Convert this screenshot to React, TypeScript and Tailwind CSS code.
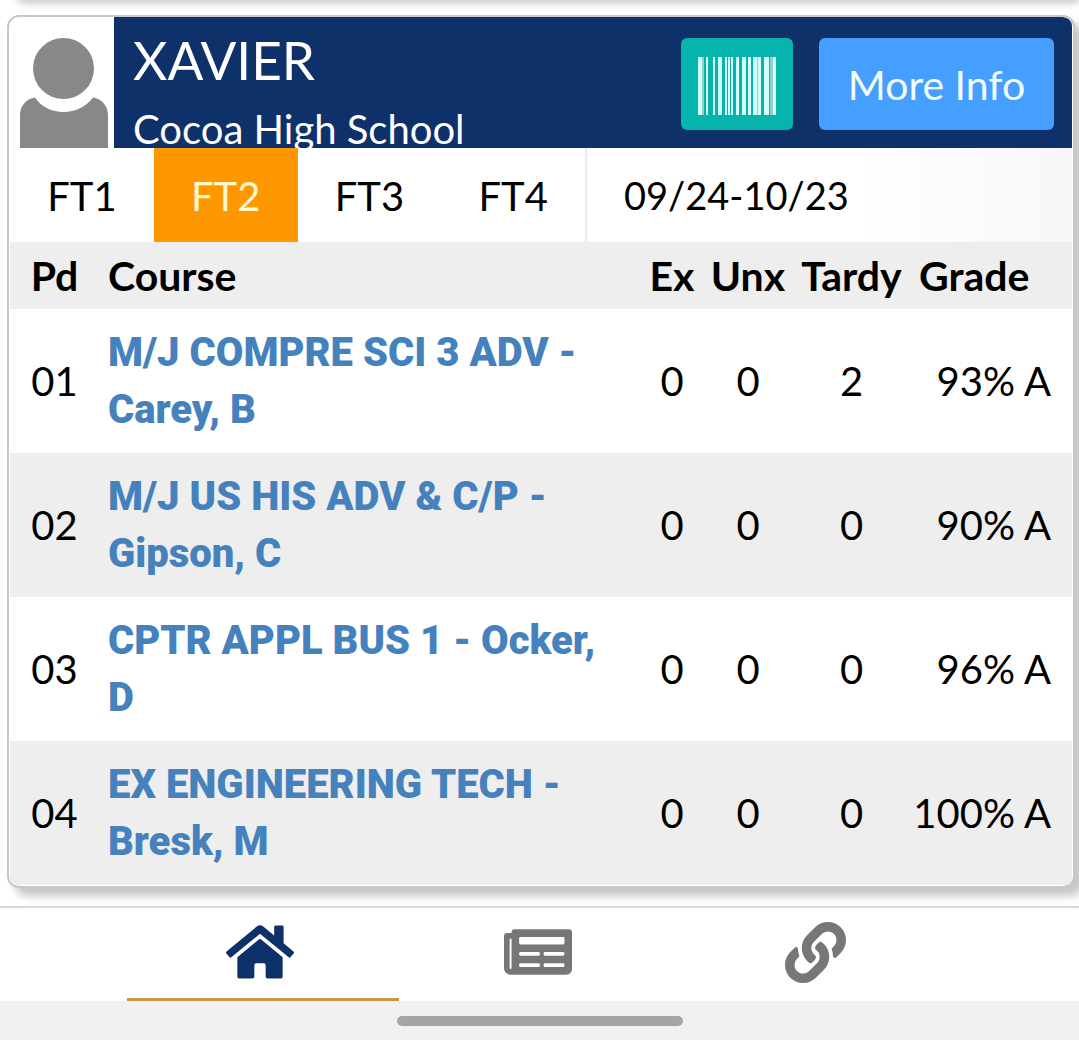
import { FaHome, FaLink, FaNewspaper } from "react-icons/fa";

const terms = ["FT1", "FT2", "FT3", "FT4"];

const courses = [
  { pd: "01", name: "M/J COMPRE SCI 3 ADV - Carey, B", ex: 0, unx: 0, tardy: 2, grade: "93% A" },
  { pd: "02", name: "M/J US HIS ADV & C/P - Gipson, C", ex: 0, unx: 0, tardy: 0, grade: "90% A" },
  { pd: "03", name: "CPTR APPL BUS 1 - Ocker, D", ex: 0, unx: 0, tardy: 0, grade: "96% A" },
  { pd: "04", name: "EX ENGINEERING TECH - Bresk, M", ex: 0, unx: 0, tardy: 0, grade: "100% A" },
];

const bars = [
  [0, 4], [8, 2], [15, 2], [20, 4], [27, 2], [30, 2], [33, 2], [38, 3],
  [44, 4], [50, 3], [55, 4], [60, 3], [66, 5], [75, 3],
];
const faintBars = [[4, 2], [59, 1], [72, 3]];

function Avatar() {
  return (
    <svg viewBox="0 0 88 110" className="h-[110px] w-[88px]" fill="#888888" aria-hidden="true">
      <circle cx="43.5" cy="30.5" r="30.5" />
      <path d="M0 110V77C0 68 6 61 15 59.500C21 69 32 74 43.500 74S66 69 73 59.500C82 61 88 68 88 77V110Z" />
    </svg>
  );
}

function Barcode() {
  return (
    <svg viewBox="0 0 78 58" className="h-[58px] w-[78px]" aria-hidden="true">
      {bars.map(([x, w]) => (
        <rect key={x} x={x} y="0" width={w} height="58" fill="#d4fffc" />
      ))}
      {faintBars.map(([x, w]) => (
        <rect key={x} x={x} y="0" width={w} height="58" fill="#93cfcc" />
      ))}
    </svg>
  );
}

const cardShadow = "rounded-xl border-2 border-[#c8c8c8] shadow-[8px_8px_8px_#c6c6c6]";

export default function App() {
  return (
    <div className="flex min-h-screen flex-col overflow-hidden bg-white font-['Lato',sans-serif] text-[40px] leading-[56px] text-black">
      <main className="flex grow flex-col pr-1 pl-[7px]">
        <div className={`${cardShadow} -mt-[26px] mb-[20px] h-[21px] shrink-0 bg-white`} />

        <section className={`${cardShadow} overflow-hidden bg-white px-px pb-px`}>
          <header className="flex h-[131px] text-white">
            <div className="flex w-[104px] shrink-0 items-end pl-[10px]">
              <Avatar />
            </div>
            <div className="flex min-w-0 grow rounded-tr-[9px] bg-[#0f316a]">
              <div className="min-w-0 grow pt-2 pl-[19px] whitespace-nowrap">
                <h1 className="text-[53px] leading-[70px]">XAVIER</h1>
                <p className="leading-[68px]">Cocoa High School</p>
              </div>
              <div className="flex shrink-0 gap-[26px] pt-[21px] pr-[18px]">
                <button aria-label="Show barcode" className="flex h-[92px] w-[112px] items-end justify-center rounded-md bg-[#04b4ad] pb-[15px]">
                  <Barcode />
                </button>
                <button className="h-[92px] w-[235px] rounded-md bg-[#469eff] pt-0.5 text-[41px] text-[#f2fdff]">More Info</button>
              </div>
            </div>
          </header>

          <div className="flex h-[94px] bg-linear-to-r from-white from-80% to-[#f7f7f7]">
            <div className="flex w-[577px] shrink-0 border-r-2 border-[#ececec]">
              {terms.map((term) => (
                <button
                  key={term}
                  className={term === "FT2" ? "flex-1 bg-[#ff9800] pt-0.5 text-[#fff8c8]" : "flex-1 pt-0.5"}
                >
                  {term}
                </button>
              ))}
            </div>
            <p className="self-center pl-[37px] text-[38px]">09/24-10/23</p>
          </div>

          <table className="w-full table-fixed text-center">
            <thead>
              <tr className="h-[67px] bg-[#eeeeee] text-[41px]">
                <th className="w-[89px] font-bold">Pd</th>
                <th className="pl-[9px] text-left font-bold">Course</th>
                <th className="w-[60px] font-bold">Ex</th>
                <th className="w-[92px] font-bold">Unx</th>
                <th className="w-[115px] font-bold">Tardy</th>
                <th className="w-[163px] pl-[10px] text-left font-bold">Grade</th>
              </tr>
            </thead>
            <tbody>
              {courses.map((c) => (
                <tr key={c.pd} className="h-36 even:bg-[#eeeeee]">
                  <td>{c.pd}</td>
                  <td className="pr-5 pl-[9px] text-left">
                    <a href="#" className="block font-['Roboto',sans-serif] leading-[57px] font-black text-[#4582bd]">
                      {c.name}
                    </a>
                  </td>
                  <td>{c.ex}</td>
                  <td>{c.unx}</td>
                  <td>{c.tardy}</td>
                  <td className="pr-[21px] text-right whitespace-nowrap">{c.grade}</td>
                </tr>
              ))}
            </tbody>
          </table>
        </section>
      </main>

      <nav className="relative flex h-[95px] shrink-0 border-t-2 border-[#d8d8d8] bg-white pr-[125px] pl-[121px] text-[#777777]">
        <a href="#" aria-label="Home" className="relative flex flex-1 justify-center pt-[10px] text-[#0f316a]">
          <FaHome className="h-[68px] w-[68px]" />
          <span className="absolute right-0 bottom-0 left-1.5 h-[3px] bg-[#cc9640]" />
        </a>
        <a href="#" aria-label="News" className="flex flex-1 justify-center pt-[10px]">
          <FaNewspaper className="h-[68px] w-[68px]" />
        </a>
        <a href="#" aria-label="Links" className="flex flex-1 justify-center pt-[14px]">
          <FaLink className="h-[61px] w-[61px]" />
        </a>
      </nav>
      <footer className="flex h-[39px] shrink-0 items-center justify-center bg-[#f1f1f1]">
        <div className="h-[10px] w-[286px] rounded-full bg-[#a5a5a5]" />
      </footer>
    </div>
  );
}
